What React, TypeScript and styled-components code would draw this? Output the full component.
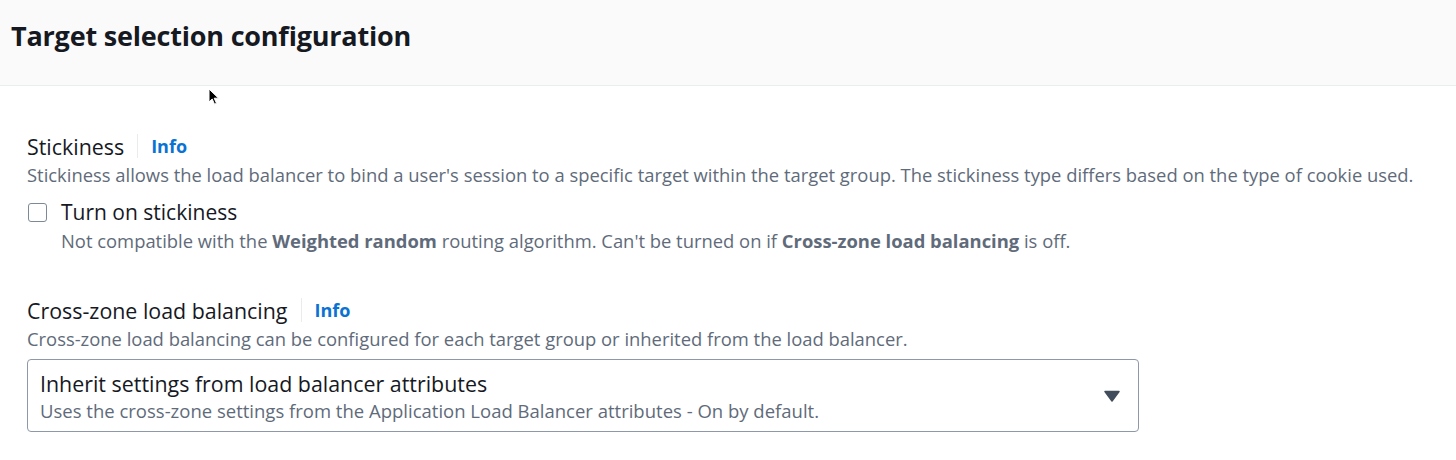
import styled, { createGlobalStyle } from "styled-components";

const Global = createGlobalStyle`
  html, body { margin: 0; padding: 0; background: #ffffff; }
  body { font-family: "Open Sans", "Noto Sans", sans-serif; color: #16191f; }
`;

const Page = styled.div`
  position: relative;
  width: 1456px;
  height: 460px;
  overflow: hidden;
  background: #ffffff;
`;

const Header = styled.header`
  height: 86px;
  box-sizing: border-box;
  padding: 17px 11px 0;
  background: #fafafa;
  border-bottom: 1px solid #eaeded;
`;

const Title = styled.h2`
  margin: 0;
  font-size: 27px;
  font-weight: 700;
  letter-spacing: -0.2px;
  color: #16191f;
`;

const Body = styled.div`
  display: flex;
  flex-direction: column;
  gap: 40px;
  padding: 44px 27px 0;
`;

const Field = styled.section`
  display: flex;
  flex-direction: column;
`;

const LabelRow = styled.div`
  display: flex;
  align-items: center;
  height: 32px;
`;

const Label = styled.span`
  font-size: 21.4px;
  color: #16191f;
`;

const Divider = styled.span`
  width: 1px;
  height: 24px;
  background: #e9ebed;
  margin: 0 13px 0 13px;
`;

const InfoLink = styled.a`
  font-size: 18px;
  font-weight: 700;
  color: #0972d3;
  text-decoration: none;
`;

const Description = styled.p<{ $indent?: boolean }>`
  margin: 0;
  font-size: 18.4px;
  line-height: 26px;
  color: #5f6b7a;
  padding-left: ${(p) => (p.$indent ? "34px" : "0")};

  b {
    font-weight: 700;
    color: #5f6b7a;
  }
`;

const CheckRow = styled.label`
  display: flex;
  align-items: center;
  gap: 14px;
  margin-top: 9px;
  height: 30px;
  & + p {
    margin-top: 1px;
  }
`;

const Box = styled.span`
  box-sizing: border-box;
  width: 19px;
  height: 19px;
  border: 1.5px solid #7d8998;
  border-radius: 3px;
  margin-left: 1px;
  background: #fff;
`;

const CheckText = styled.span`
  font-size: 21px;
  color: #16191f;
`;

const Select = styled.div`
  display: flex;
  align-items: center;
  justify-content: space-between;
  box-sizing: border-box;
  width: 1112px;
  height: 73px;
  margin-top: 7px;
  padding: 0 18px 0 12px;
  border: 1.5px solid #8d99a8;
  border-radius: 4px;
`;

const SelectText = styled.div`
  display: flex;
  flex-direction: column;
  gap: 0;
  padding-top: 2px;
`;

const SelectMain = styled.span`
  font-size: 21.4px;
  line-height: 28px;
  color: #16191f;
`;

const SelectSub = styled.span`
  font-size: 18.5px;
  line-height: 26px;
  color: #5f6b7a;
`;

const Cursor = styled.svg`
  position: absolute;
  left: 208px;
  top: 88px;
`;

export default function App() {
  return (
    <Page>
      <Global />
      <Header>
        <Title>Target selection configuration</Title>
      </Header>
      <Body>
        <Field>
          <LabelRow>
            <Label>Stickiness</Label>
            <Divider />
            <InfoLink href="#">Info</InfoLink>
          </LabelRow>
          <Description>
            Stickiness allows the load balancer to bind a user's session to a specific target within the target
            group. The stickiness type differs based on the type of cookie used.
          </Description>
          <CheckRow>
            <Box />
            <CheckText>Turn on stickiness</CheckText>
          </CheckRow>
          <Description $indent>
            Not compatible with the <b>Weighted random</b> routing algorithm. Can't be turned on if{" "}
            <b>Cross-zone load balancing</b> is off.
          </Description>
        </Field>
        <Field>
          <LabelRow>
            <Label>Cross-zone load balancing</Label>
            <Divider />
            <InfoLink href="#">Info</InfoLink>
          </LabelRow>
          <Description>
            Cross-zone load balancing can be configured for each target group or inherited from the load balancer.
          </Description>
          <Select>
            <SelectText>
              <SelectMain>Inherit settings from load balancer attributes</SelectMain>
              <SelectSub>Uses the cross-zone settings from the Application Load Balancer attributes - On by default.</SelectSub>
            </SelectText>
            <svg width="16" height="12" viewBox="0 0 16 12">
              <path d="M1 1.5h14L8 11z" fill="#414d5c" stroke="#414d5c" strokeWidth="1.5" strokeLinejoin="round" />
            </svg>
          </Select>
        </Field>
      </Body>
      <Cursor width="12" height="18" viewBox="0 0 12 18">
        <path d="M1 1v13l3.2-3 2.3 5.2 2-0.9-2.3-5.1H10.5z" fill="#000" stroke="#fff" strokeWidth="1" />
      </Cursor>
    </Page>
  );
}
